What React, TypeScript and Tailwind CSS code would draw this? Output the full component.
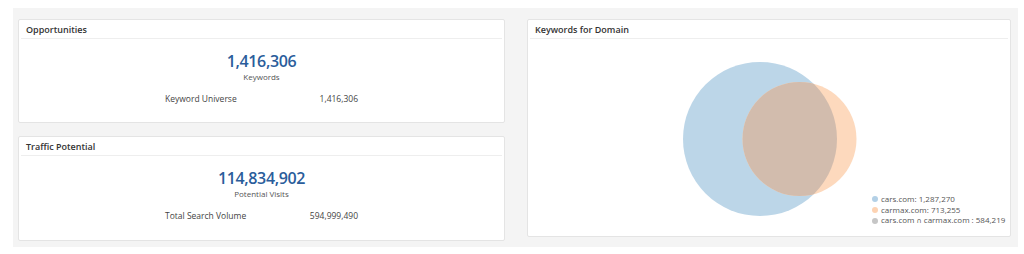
const font = { fontFamily: '"Open Sans", "Liberation Sans", sans-serif' }

function CardHeader({ title }: { title: string }) {
  return (
    <div className="mx-[2px] flex h-[19px] items-center border-b border-[#eeeeee] px-[5px] pt-[1px]">
      <span className="text-[9px] font-semibold text-[#333333]">{title}</span>
    </div>
  )
}

function StatCard({
  title,
  value,
  caption,
  label,
  total,
  height,
}: {
  title: string
  value: string
  caption: string
  label: string
  total: string
  height: string
}) {
  return (
    <div className={`${height} rounded-[2px] border border-[#e4e4e4] bg-white`}>
      <CardHeader title={title} />
      <div className="flex flex-col items-center pt-[12px]">
        <div className="text-[16px] leading-[20px] font-semibold tracking-[-0.35px] text-[#2a5d9b]">
          {value}
        </div>
        <div className="text-[8px] leading-[12px] text-[#555555]">{caption}</div>
        <div className="mt-[10px] flex w-[193px] justify-between text-[8.5px] leading-[12px] text-[#444444]">
          <span>{label}</span>
          <span>{total}</span>
        </div>
      </div>
    </div>
  )
}

function Venn() {
  return (
    <svg className="h-full w-full" viewBox="0 0 482 197">
      <defs>
        <clipPath id="blue-clip">
          <circle cx="232" cy="100" r="77" />
        </clipPath>
      </defs>
      <circle cx="232" cy="100" r="77" fill="#bcd6e8" />
      <circle cx="271.5" cy="100" r="57" fill="#fdd9bd" />
      <circle cx="271.5" cy="100" r="57" fill="#d2bcad" clipPath="url(#blue-clip)" />
    </svg>
  )
}

export default function App() {
  return (
    <div className="h-[254px] w-[1024px] bg-white pl-[13px] pt-[8px]" style={font}>
      <div className="flex h-[239px] w-[1005px] gap-[22px] bg-[#f4f4f4] pl-[5px] pt-[11px]">
        {/* Left column */}
        <div className="flex w-[487px] flex-col gap-[13px]">
          <StatCard
            title="Opportunities"
            value="1,416,306"
            caption="Keywords"
            label="Keyword Universe"
            total="1,416,306"
            height="h-[104px]"
          />
          <StatCard
            title="Traffic Potential"
            value="114,834,902"
            caption="Potential Visits"
            label="Total Search Volume"
            total="594,999,490"
            height="h-[105px]"
          />
        </div>
        {/* Keywords for Domain */}
        <div className="flex h-[218px] w-[484px] flex-col rounded-[2px] border border-[#e4e4e4] bg-white">
          <CardHeader title="Keywords for Domain" />
          <div className="relative flex-1">
            <Venn />
            <div className="absolute left-[344px] top-[154px] flex flex-col text-[8px] text-[#555555]">
              <div className="flex h-[11px] items-center gap-[3px]">
                <span className="h-[6px] w-[6px] rounded-full bg-[#b3d0e6]"></span>
                <span>cars.com: 1,287,270</span>
              </div>
              <div className="flex h-[11px] items-center gap-[3px]">
                <span className="h-[6px] w-[6px] rounded-full bg-[#fdd3b3]"></span>
                <span>carmax.com: 713,255</span>
              </div>
              <div className="flex h-[11px] items-center gap-[3px]">
                <span className="h-[6px] w-[6px] rounded-full bg-[#c6c6c6]"></span>
                <span>
                  cars.com{" "}
                  <span className="font-['DejaVu_Sans'] text-[7px]">∩</span>{" "}
                  carmax.com : 584,219
                </span>
              </div>
            </div>
          </div>
        </div>
      </div>
    </div>
  )
}
